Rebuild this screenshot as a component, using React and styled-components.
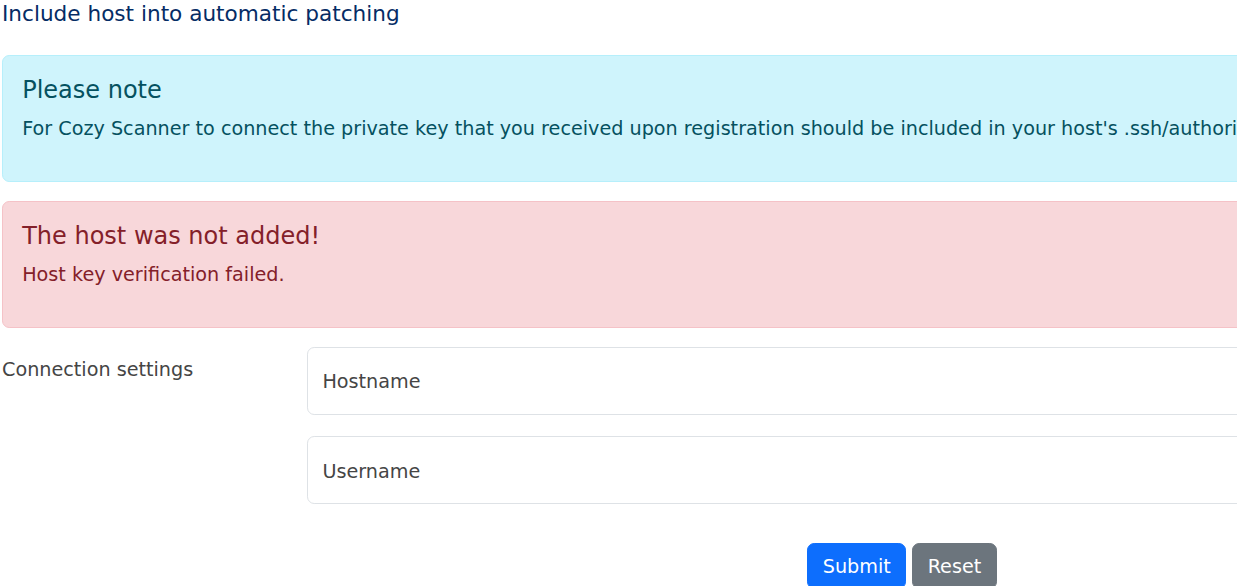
import styled, { createGlobalStyle } from 'styled-components';

const GlobalStyle = createGlobalStyle`
    html, body {
        margin: 0;
        overflow: hidden;
        background: #fff;
    }
    body {
        font-family: 'DejaVu Sans', 'Liberation Sans', sans-serif;
        font-size: 19.2px;
        line-height: 1.5;
        color: #212529;
    }
    *, *::before, *::after {
        box-sizing: border-box;
    }
`

const Page = styled.div`
    width: 1497px;
    padding-left: 2px;
`
const Title = styled.h1`
    margin: 0 0 28px 0;
    padding-top: 1px;
    font-size: 21.6px;
    font-weight: 400;
    line-height: 1.2;
    color: #052c65;
`
const tones = {
    info: { bg: '#cff4fc', border: '#b6effb', text: '#055160' },
    danger: { bg: '#f8d7da', border: '#f5c2c7', text: '#842029' },
}
const Alert = styled.div`
    padding: 20.2px 19.2px 18.2px;
    margin-bottom: 19.2px;
    border: 1px solid ${p => tones[p.$tone].border};
    border-radius: 7.2px;
    background: ${p => tones[p.$tone].bg};
    color: ${p => tones[p.$tone].text};
`
const AlertHeading = styled.h5`
    margin: 0 0 10.6px 0;
    font-size: 24px;
    font-weight: 400;
    line-height: 1.2;
    color: inherit;
`
const AlertText = styled.p`
    margin: 0 0 18.2px 0;
    white-space: nowrap;
`
const FormRow = styled.div`
    display: grid;
    grid-template-columns: 305px 1fr;
    margin-bottom: ${p => p.$gap || '21.4px'};
`
const Label = styled.label`
    padding-top: 9.7px;
    color: #454545;
`
const Field = styled.input`
    display: block;
    width: 100%;
    height: 68px;
    padding: 2px 14.4px 0;
    border: 1px solid #dee2e6;
    border-radius: 7.2px;
    font-family: inherit;
    font-size: 19.2px;
    color: #212529;
    background: #fff;
    outline: none;

    &::placeholder {
        color: #454545;
        opacity: 1;
    }
`
const Buttons = styled.div`
    grid-column: 2;
    display: flex;
    justify-content: center;
    gap: 6px;
`
const Button = styled.button`
    padding: 8.2px 14.4px 6.2px;
    border: 1px solid ${p => p.$color};
    border-radius: 7.2px;
    background: ${p => p.$color};
    color: #fff;
    font-family: inherit;
    font-size: 19.2px;
    line-height: 1.5;
    cursor: pointer;
`

const App = () => {
    return (
        <>
        <GlobalStyle />
        <Page>
            <Title>Include host into automatic patching</Title>
            <Alert $tone="info">
                <AlertHeading>Please note</AlertHeading>
                <AlertText>
                    For Cozy Scanner to connect the private key that you received upon registration should be included in your host's .ssh/authorized_keys file.
                </AlertText>
            </Alert>
            <Alert $tone="danger">
                <AlertHeading>The host was not added!</AlertHeading>
                <AlertText>Host key verification failed.</AlertText>
            </Alert>
            <form onSubmit={e => e.preventDefault()}>
                <FormRow>
                    <Label htmlFor="hostname">Connection settings</Label>
                    <Field id="hostname" placeholder="Hostname" />
                </FormRow>
                <FormRow $gap="39.3px">
                    <div />
                    <Field id="username" placeholder="Username" />
                </FormRow>
                <FormRow>
                    <Buttons>
                        <Button type="submit" $color="#0d6efd">Submit</Button>
                        <Button type="reset" $color="#6c757d">Reset</Button>
                    </Buttons>
                </FormRow>
            </form>
        </Page>
        </>
    );
}

export default App;
